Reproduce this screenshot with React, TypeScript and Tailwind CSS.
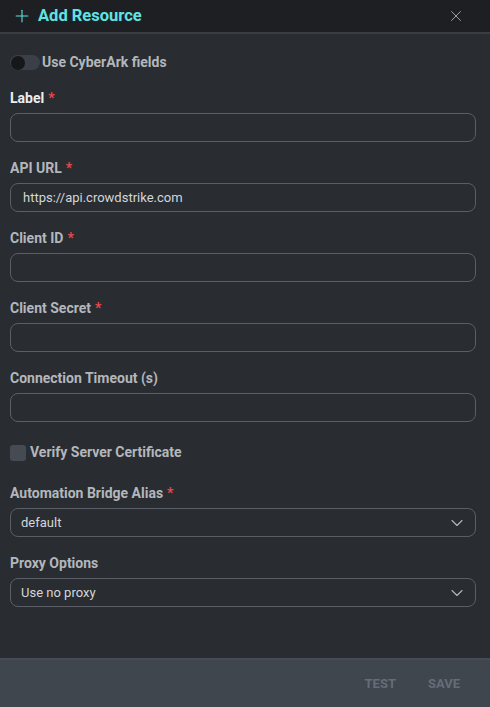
import { ChevronDown, Plus, X } from "lucide-react";

const fields = [
  { label: "Label", required: true, value: "", strong: true },
  { label: "API URL", required: true, value: "https://api.crowdstrike.com" },
  { label: "Client ID", required: true, value: "" },
  { label: "Client Secret", required: true, value: "" },
  { label: "Connection Timeout (s)", required: false, value: "" },
];

function FieldLabel({ text, required, strong }: { text: string; required?: boolean; strong?: boolean }) {
  return (
    <div className={`text-[14px] font-bold leading-4 ${strong ? "text-[#eceef0]" : "text-[#b3b7bc]"}`}>
      {text}
      {required && <span className="ml-1 text-[#e5484d]">*</span>}
    </div>
  );
}

function TextField({ label, required, value, strong }: { label: string; required?: boolean; value: string; strong?: boolean }) {
  return (
    <div className="flex flex-col gap-[7px]">
      <FieldLabel text={label} required={required} strong={strong} />
      <div className="flex h-[29px] items-center rounded-lg border border-[#5a5f67] px-3 text-[13px] text-[#d4d6d9]">
        {value}
      </div>
    </div>
  );
}

function SelectField({ label, required, value }: { label: string; required?: boolean; value: string }) {
  return (
    <div className="flex flex-col gap-[7px]">
      <FieldLabel text={label} required={required} />
      <div className="flex h-[29px] items-center justify-between rounded-lg border border-[#5a5f67] pl-[10px] pr-[8px] text-[13px] text-[#d4d6d9]">
        <span>{value}</span>
        <ChevronDown size={20} strokeWidth={1.3} className="text-[#b3b7bc]" />
      </div>
    </div>
  );
}

export default function App() {
  return (
    <div
      className="flex h-[707px] w-[490px] flex-col bg-[#292c31]"
      style={{ fontFamily: "Roboto, 'Liberation Sans', sans-serif" }}
    >
      <div className="flex h-[34px] items-center justify-between border-b-2 border-[#3b3d41] bg-[#1e1f23] pl-3 pr-[25px]">
        <div className="flex items-center gap-[6px] text-[#5ee4e4]">
          <Plus size={20} strokeWidth={1.3} />
          <span className="text-[16.5px] font-bold">Add Resource</span>
        </div>
        <X size={18} strokeWidth={1.3} className="text-[#a0a3a8]" />
      </div>

      <div className="flex flex-1 flex-col pl-[10px] pr-[14px] pt-[18px]">
        <div className="flex items-center gap-[2px]">
          <div className="flex h-[15px] w-[30px] items-center rounded-full bg-[#3b4048] pl-px">
            <div className="h-[14px] w-[14px] rounded-full bg-[#15171a]" />
          </div>
          <span className="text-[14px] font-bold text-[#b3b7bc]">Use CyberArk fields</span>
        </div>

        <div className="mt-[17px] flex flex-col gap-[18px]">
          {fields.map((f) => (
            <TextField key={f.label} {...f} />
          ))}
        </div>

        <div className="mt-[20px] flex items-center gap-[4px]">
          <div className="h-[16px] w-[16px] rounded-[3px] bg-[#464b53]" />
          <span className="text-[14px] font-bold text-[#b3b7bc]">Verify Server Certificate</span>
        </div>

        <div className="mt-[22px] flex flex-col gap-[18px]">
          <SelectField label="Automation Bridge Alias" required value="default" />
          <SelectField label="Proxy Options" value="Use no proxy" />
        </div>
      </div>

      <div className="flex h-[49px] items-center justify-end gap-8 border-t-2 border-[#474c54] bg-[#3f464e] pr-[30px]">
        <span className="text-[13px] font-bold text-[#666d76]">TEST</span>
        <span className="text-[13px] font-bold text-[#666d76]">SAVE</span>
      </div>
    </div>
  );
}
